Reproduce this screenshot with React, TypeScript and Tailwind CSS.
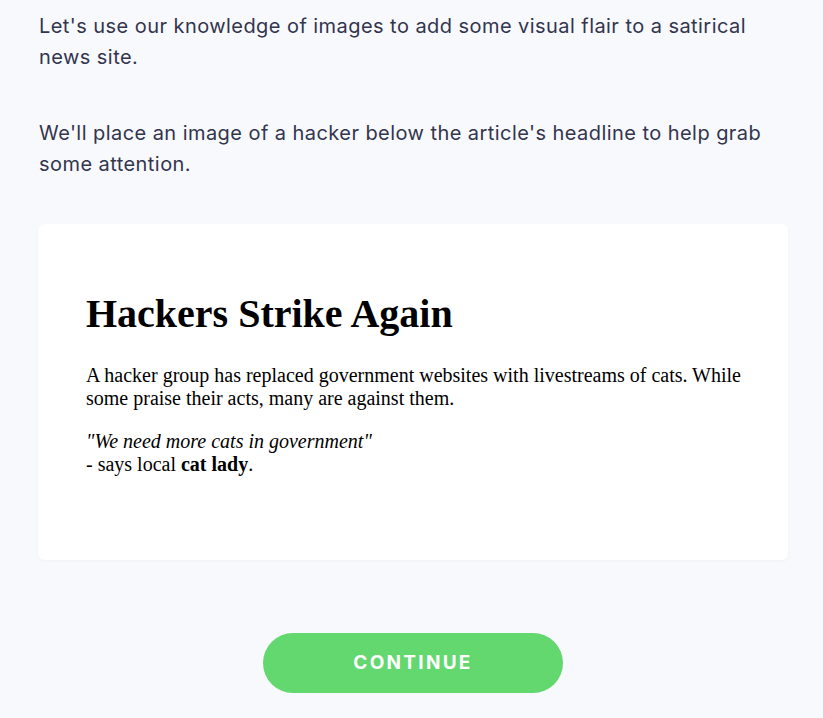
export default function App() {
  return (
    <div className="min-h-[718px] w-full bg-[#f8f9fd]">
      <div className="ml-[38px] w-[750px] pt-[11px]">
        <div className="pl-[1px] font-['Inter',sans-serif] text-[20px] leading-[31px] tracking-[0.022em] text-[#32354d]">
          <p className="whitespace-nowrap">
            Let's use our knowledge of images to add some visual flair to a satirical
            <br />
            news site.
          </p>
          <p className="mt-[45px] whitespace-nowrap">
            We'll place an image of a hacker below the article's headline to help grab
            <br />
            some attention.
          </p>
        </div>

        <div className="mt-[44px] h-[336px] rounded-md bg-white pl-[48px] pt-[40px] font-['Liberation_Serif',serif] text-black shadow-[0_1px_3px_rgba(30,40,90,0.04)]">
          <h1 className="mt-[27px] text-[40px] font-bold leading-[46px]">Hackers Strike Again</h1>
          <p className="mt-[27px] whitespace-nowrap text-[20px] leading-[23px]">
            A hacker group has replaced government websites with livestreams of cats. While
            <br />
            some praise their acts, many are against them.
          </p>
          <p className="mt-[20px] text-[20px] leading-[23px]">
            <em>"We need more cats in government"</em>
            <br />- says local <strong>cat lady</strong>.
          </p>
        </div>

        <div className="mt-[73px] flex justify-center">
          <button className="h-[60px] w-[300px] rounded-full bg-[#62d86f] font-['Inter',sans-serif] text-[19px] font-bold tracking-[0.12em] text-white">
            CONTINUE
          </button>
        </div>
      </div>
    </div>
  );
}
